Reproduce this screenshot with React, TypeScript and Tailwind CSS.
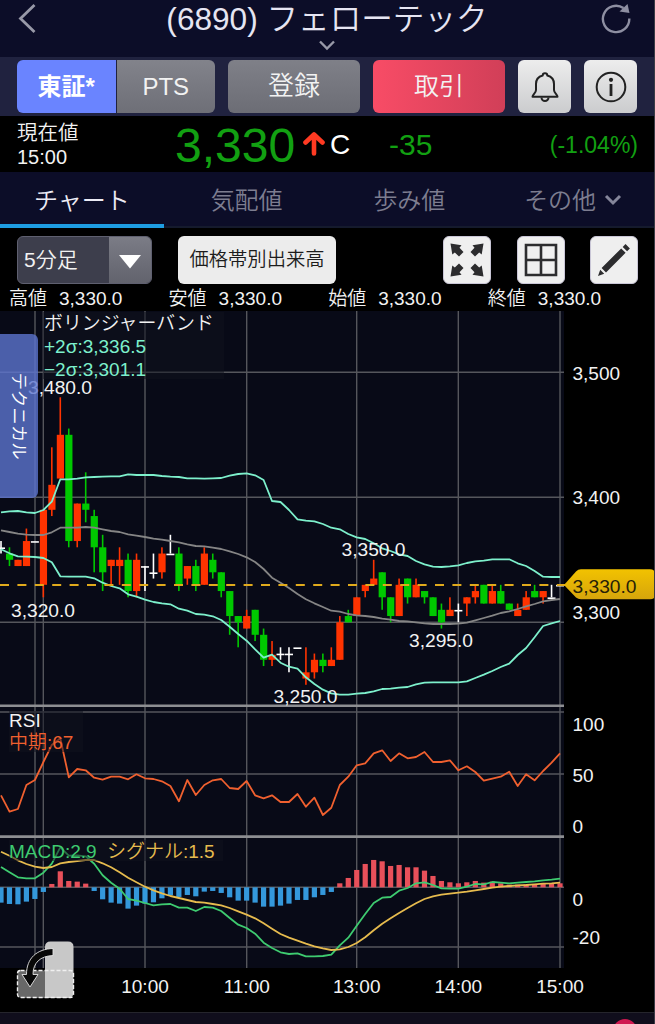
import React from 'react';

type Candle = [kind: 'r' | 'g' | 'w', high: number, top: number, bottom: number, low: number];

const STEP = 8.47;
const xAt = (i: number) => 1 + i * STEP;
const priceY = (p: number) => 372.3 + (3500 - p) * 1.25;

// 5 minute bars: colour, high, body top, body bottom, low
const CANDLES: Candle[] = [
  ['w', 3365, 3360, 3360, 3355], ['g', 3360, 3355, 3350, 3345], ['r', 3350, 3350, 3345, 3345], ['r', 3375, 3365, 3345, 3345],
  ['w', 3365, 3365, 3365, 3365], ['r', 3390, 3390, 3330, 3320], ['r', 3440, 3410, 3390, 3385], ['r', 3480, 3450, 3415, 3415],
  ['g', 3455, 3450, 3365, 3360], ['r', 3395, 3395, 3365, 3360], ['g', 3420, 3395, 3390, 3380], ['g', 3390, 3385, 3360, 3340],
  ['g', 3370, 3360, 3340, 3325], ['r', 3350, 3350, 3345, 3330], ['r', 3360, 3350, 3345, 3330], ['g', 3355, 3350, 3325, 3320],
  ['r', 3355, 3350, 3325, 3320], ['w', 3345, 3345, 3345, 3325], ['w', 3355, 3340, 3340, 3335], ['r', 3360, 3355, 3340, 3335],
  ['w', 3370, 3355, 3355, 3355], ['g', 3360, 3355, 3330, 3325], ['r', 3345, 3345, 3335, 3330], ['g', 3350, 3345, 3330, 3325],
  ['r', 3360, 3355, 3330, 3330], ['g', 3355, 3350, 3340, 3335], ['g', 3340, 3340, 3325, 3320], ['g', 3325, 3325, 3305, 3290],
  ['g', 3305, 3305, 3300, 3280], ['r', 3310, 3305, 3295, 3295], ['g', 3310, 3310, 3290, 3285], ['g', 3295, 3290, 3270, 3265],
  ['r', 3285, 3274, 3270, 3265], ['w', 3280, 3275, 3275, 3270], ['w', 3280, 3275, 3275, 3260], ['w', 3280, 3280, 3280, 3280],
  ['r', 3280, 3260, 3255, 3250], ['r', 3275, 3270, 3260, 3255], ['g', 3275, 3270, 3265, 3260], ['r', 3280, 3270, 3265, 3265],
  ['r', 3305, 3300, 3270, 3270], ['g', 3310, 3305, 3300, 3300], ['r', 3320, 3320, 3305, 3305], ['r', 3330, 3330, 3325, 3320],
  ['r', 3350, 3335, 3330, 3330], ['g', 3340, 3340, 3320, 3310], ['g', 3320, 3320, 3305, 3300], ['r', 3335, 3330, 3305, 3305],
  ['g', 3335, 3335, 3320, 3315], ['r', 3335, 3330, 3320, 3320], ['g', 3325, 3325, 3320, 3315], ['g', 3320, 3320, 3305, 3305],
  ['g', 3315, 3310, 3300, 3295], ['r', 3320, 3310, 3305, 3305], ['w', 3315, 3310, 3310, 3300], ['r', 3320, 3320, 3315, 3305],
  ['r', 3330, 3325, 3320, 3315], ['g', 3330, 3330, 3315, 3315], ['r', 3330, 3325, 3315, 3315], ['g', 3330, 3325, 3315, 3315],
  ['g', 3315, 3315, 3310, 3310], ['r', 3315, 3310, 3305, 3305], ['r', 3325, 3320, 3310, 3310], ['g', 3330, 3325, 3320, 3320],
  ['r', 3325, 3325, 3320, 3315], ['w', 3330, 3320, 3320, 3320], ['w', 3330, 3330, 3330, 3330],
];

// Indicator series, in thirds of a pixel below the panel origin
const UPPER = [607, 604, 603, 607, 609, 600, 575, 508, 508, 506, 502, 501, 500, 499, 499, 493, 495, 495, 495, 498, 500, 501, 505, 505, 506, 505, 504, 497, 492, 490, 496, 510, 573, 576, 600, 628, 632, 634, 642, 653, 658, 672, 682, 687, 700, 715, 723, 733, 738, 753, 763, 770, 771, 769, 766, 759, 754, 752, 748, 748, 748, 760, 768, 783, 800, 801, 801];
const MIDDLE = [661, 666, 671, 674, 675, 675, 667, 653, 653, 653, 651, 653, 658, 663, 666, 673, 677, 681, 686, 689, 693, 697, 703, 708, 709, 713, 717, 724, 732, 742, 756, 777, 803, 818, 834, 852, 868, 880, 891, 902, 905, 912, 916, 918, 921, 926, 929, 933, 934, 937, 940, 942, 942, 942, 941, 938, 931, 924, 917, 909, 904, 897, 889, 882, 874, 870, 867];
const LOWER = [718, 730, 739, 740, 741, 744, 757, 799, 800, 800, 800, 805, 818, 828, 835, 853, 860, 869, 876, 880, 883, 896, 902, 912, 914, 919, 930, 950, 972, 992, 1018, 1043, 1034, 1058, 1070, 1076, 1102, 1122, 1139, 1150, 1154, 1154, 1151, 1149, 1144, 1137, 1136, 1133, 1131, 1123, 1118, 1117, 1117, 1117, 1117, 1114, 1104, 1094, 1083, 1071, 1061, 1035, 1014, 982, 948, 940, 933];
const RSI = [286, 335, 327, 255, 240, 186, 135, 115, 232, 207, 211, 233, 239, 230, 230, 238, 223, 235, 237, 244, 258, 304, 240, 285, 255, 241, 237, 264, 267, 243, 286, 295, 286, 306, 306, 282, 320, 293, 345, 323, 255, 230, 196, 190, 160, 151, 183, 160, 175, 171, 156, 186, 186, 181, 211, 199, 216, 242, 236, 230, 215, 258, 223, 241, 213, 188, 160];
const SIGNAL = [455, 467, 481, 492, 500, 504, 501, 490, 486, 483, 480, 480, 490, 502, 517, 533, 547, 560, 571, 580, 588, 594, 600, 606, 608, 612, 616, 624, 634, 644, 655, 670, 686, 702, 713, 722, 731, 739, 745, 750, 748, 741, 729, 712, 691, 671, 655, 639, 624, 610, 597, 589, 584, 581, 578, 575, 571, 567, 563, 560, 558, 556, 555, 553, 551, 550, 548];
const HIST = [-46, -50, -51, -43, -35, -14, 10, 48, 19, 17, 11, -11, -36, -46, -49, -64, -55, -49, -45, -33, -24, -29, -23, -27, -13, -11, -17, -30, -40, -40, -46, -58, -58, -55, -49, -38, -38, -30, -23, -14, 12, 28, 52, 70, 82, 78, 64, 67, 60, 60, 50, 34, 19, 15, 12, 15, 19, 14, 17, 12, 8, 8, 9, 9, 10, 11, 12];
const MACD = SIGNAL.map((s, i) => s - HIST[i]);

const COLORS = { r: '#ff3300', g: '#00c800', w: '#ffffff' };
const points = (series: number[], origin: number) =>
  series.map((v, i) => `${xAt(i).toFixed(1)},${(origin + v / 3).toFixed(1)}`).join(' ');

const TIMES: [number, string][] = [[145, '10:00'], [246.7, '11:00'], [356.7, '13:00'], [458.3, '14:00'], [560, '15:00']];
const AXIS: [number, string][] = [
  [379.5, '3,500'], [504.3, '3,400'], [618.7, '3,300'], [731, '100'], [782.3, '50'], [833, '0'], [906.3, '0'], [943.7, '-20'],
];
const MARKS: [number, number, string][] = [
  [28, 393.7, '3,480.0'], [11, 616.7, '3,320.0'], [341.5, 556, '3,350.0'], [409, 646.7, '3,295.0'], [273.5, 703.3, '3,250.0'],
];

function Chart() {
  return (
    <svg width="655" height="701" viewBox="0 311 655 701" className="block" fontSize="19" fill="#f2f2f2">
      <rect x="0" y="311" width="564" height="657" fill="#080a17" />
      <g stroke="#55565c" strokeWidth="1.4">
        {[35, 43.3, 145, 246.7, 356.7, 458.3, 560].map((x) => (
          <line key={x} x1={x} x2={x} y1="311" y2="968" />
        ))}
        {[372.3, 497.3, 622.3, 712, 774, 887.3, 947].map((y) => (
          <line key={y} x1="0" x2="564" y1={y} y2={y} />
        ))}
      </g>
      <g stroke="#8d8e92" strokeWidth="2.6">
        <line x1="0" x2="564" y1="705.8" y2="705.8" />
        <line x1="0" x2="564" y1="836.6" y2="836.6" />
      </g>

      {/* Candles */}
      {CANDLES.map(([kind, high, top, bottom, low], i) => {
        const x = xAt(i);
        if (kind === 'w') {
          return (
            <g key={i} stroke="#fff" strokeWidth="1.6">
              <line x1={x} x2={x} y1={priceY(high)} y2={priceY(low)} />
              <line x1={x - 4} x2={x + 4} y1={priceY(top) + 0.9} y2={priceY(top) + 0.9} />
            </g>
          );
        }
        return (
          <g key={i} fill={COLORS[kind]}>
            <rect x={x - 0.8} y={priceY(high)} width="1.6" height={priceY(low) - priceY(high)} />
            <rect x={x - 3.5} y={priceY(top)} width="7.2" height={priceY(bottom) - priceY(top)} />
          </g>
        );
      })}

      <g fill="none" strokeWidth="1.8" strokeLinejoin="round">
        <polyline points={points(UPPER, 310)} stroke="#7df0cc" />
        <polyline points={points(MIDDLE, 310)} stroke="#858585" />
        <polyline points={points(LOWER, 310)} stroke="#7df0cc" />
        <polyline points={points(RSI, 700)} stroke="#f0602f" />
      </g>
      <line x1="0" x2="566" y1="585" y2="585" stroke="#e0aa1c" strokeWidth="1.8" strokeDasharray="9 8.4" />

      {/* MACD */}
      {HIST.map((v, i) => (
        <rect
          key={i}
          x={xAt(i) - 2.6}
          y={v > 0 ? 887.3 - v / 3 : 887.3}
          width="5.2"
          height={Math.abs(v) / 3}
          fill={v > 0 ? '#e8505a' : '#3498db'}
        />
      ))}
      <g fill="none" strokeWidth="1.8" strokeLinejoin="round">
        <polyline points={points(MACD, 700)} stroke="#3ecb70" />
        <polyline points={points(SIGNAL, 700)} stroke="#e6bb4e" />
      </g>

      {/* Legends */}
      <g fill="#10121e" fillOpacity="0.5">
        <rect x="43" y="312" width="181" height="67" />
        <rect x="9" y="711" width="74" height="41" />
        <rect x="9" y="840" width="214" height="21" />
      </g>
      <text x="44" y="329.5" fontSize="18.9">ボリンジャーバンド</text>
      <text x="44" y="353" fill="#7df0cc">+2σ:3,336.5</text>
      <text x="44" y="375.7" fill="#7df0cc">−2σ:3,301.1</text>
      <text x="9" y="726.7">RSI</text>
      <text x="9" y="748.5" fill="#f0602f">中期:67</text>
      <text x="9" y="857.5" fill="#3ecb70">MACD:2.9</text>
      <text x="107" y="857.5" fill="#e6bb4e">シグナル:1.5</text>

      {MARKS.map(([x, y, label]) => (
        <text key={label} x={x} y={y} fontSize="19.2">{label}</text>
      ))}
      {AXIS.map(([y, label]) => (
        <text key={y} x="572.5" y={y}>{label}</text>
      ))}
      {TIMES.map(([x, label]) => (
        <text key={label} x={x} y="992.5" textAnchor="middle">{label}</text>
      ))}

      {/* Current price tag */}
      <defs>
        <linearGradient id="tag" x1="0" y1="0" x2="0" y2="1">
          <stop offset="0" stopColor="#f2c200" />
          <stop offset="1" stopColor="#d6a50c" />
        </linearGradient>
      </defs>
      <path d="M564 585 L576 571.5 Q578 569.3 581 569.3 H650 Q655 569.3 655 574 V595 Q655 599.3 650 599.3 H581 Q578 599.3 576 597.5 Z" fill="url(#tag)" />
      <text x="572.5" y="592.7" fontSize="19.2" fill="#262108">3,330.0</text>

      {/* Rotate handle */}
      <path d="M45 947 Q45 941.5 50.5 941.5 H68 Q73.5 941.5 73.5 947 V992 Q73.5 998 68 998 H45 Z" fill="#c8c8c8" />
      <path d="M17.5 970.5 H45 V998 H22 Q17.5 998 17.5 993 Z" fill="#686868" />
      <rect x="17.5" y="970.5" width="56" height="27" rx="3" fill="none" stroke="#f0f0f0" strokeWidth="1.4" strokeDasharray="4 2" />
      <path d="M53 948.5 C37 949 26.500 958 26.500 974.500 H22 L30 987 L38 974.500 H33 C33 963 40 956 53 955.500 Z" fill="#080808" stroke="#e4e4e4" strokeWidth="0.9" />
    </svg>
  );
}

function Quote({ label }: { label: string }) {
  return (
    <div className="flex w-[159.6px] items-center text-[19px]">
      <span className="w-[50px]">{label}</span>
      <span>3,330.0</span>
    </div>
  );
}

const topIcon = 'flex size-[53px] items-center justify-center rounded-[6px] bg-linear-to-b from-[#ededed] to-[#cbccce]';
const toolIcon = 'flex size-12 items-center justify-center rounded-[6px] border border-[#c9c6d6] bg-[#efefef]';

export default function App() {
  return (
    <div className="relative flex h-[1024px] w-[655px] flex-col overflow-hidden bg-black font-['Liberation_Sans','Noto_Sans_CJK_JP',sans-serif] font-[350] text-[#f2f2f2]">
      {/* Title */}
      <header className="flex h-[57px] shrink-0 items-start justify-between bg-[#0c0d28] pr-6 pl-[17px]">
        <svg width="36" height="38" viewBox="0 0 36 38" fill="none" stroke="#9899a8" strokeWidth="2.8">
          <path d="M17.5 5 L3.5 18.5 L17.5 32" />
        </svg>
        <div className="flex flex-col items-center">
          <h1 className="h-[39px] text-[31.6px] leading-[38px] font-[350] whitespace-pre text-[#e6e5f2]">(6890) フェローテック</h1>
          <svg width="18" height="12" viewBox="0 0 18 12" fill="none" stroke="#9899a8" strokeWidth="2.4">
            <path d="M2 2.5 L9 9.5 L16 2.5" />
          </svg>
        </div>
        <svg width="30" height="36" viewBox="0 0 30 36" fill="none" stroke="#8e8fa2" strokeWidth="2.4">
          <path d="M28.3 18.5 A13.2 13.2 0 1 1 22.5 8" />
          <path d="M26.5 4 L28.5 13 L18.5 11.500 Z" fill="#8e8fa2" stroke="none" />
        </svg>
      </header>

      {/* Market and order buttons */}
      <div className="flex h-[59px] shrink-0 items-start bg-[#20223f] pt-[3px] pl-[17px] text-center text-2xl leading-[53px]">
        <div className="h-[53px] w-[98.5px] rounded-l-[6px] bg-[#6a84ff] font-bold text-white">東証*</div>
        <div className="ml-px h-[53px] w-[98.5px] rounded-r-[6px] bg-linear-to-b from-[#82838b] to-[#6e6f77]">PTS</div>
        <div className="ml-[13px] h-[53px] w-[132px] rounded-[6px] bg-linear-to-b from-[#7f8088] to-[#6c6d75] text-[26px]">登録</div>
        <div className="ml-[13px] h-[53px] w-[132px] rounded-[6px] bg-linear-to-r from-[#f84c66] to-[#d13f58] text-[25px]">取引</div>
        <div className={`ml-[13px] ${topIcon}`}>
          <svg width="30" height="32" viewBox="0 0 30 32" fill="none" stroke="#222" strokeWidth="2" strokeLinejoin="round">
            <path d="M12.7 4.5 A2.3 2.3 0 0 1 17.3 4.5 C22 5.7 24 9 24 13 V19 C24 22 27.5 23.5 27.5 25.8 H2.5 C2.5 23.5 6 22 6 19 V13 C6 9 8 5.7 12.7 4.5 Z" />
            <path d="M11.5 26.5 A3.5 3.5 0 0 0 18.5 26.5" />
          </svg>
        </div>
        <div className={`ml-[13px] ${topIcon}`}>
          <svg width="32" height="32" viewBox="0 0 32 32" fill="none" stroke="#222" strokeWidth="2">
            <circle cx="16" cy="16" r="14.3" />
            <circle cx="16" cy="8.8" r="2.1" fill="#222" stroke="none" />
            <path d="M16 13 V25" strokeWidth="2.8" />
          </svg>
        </div>
      </div>

      {/* Last price */}
      <div className="flex h-14 shrink-0 items-center text-[#12a012]">
        <div className="ml-[17px] w-[158px] pt-px text-[20.5px] leading-[25px] text-[#f2f2f2]">
          <div>現在値</div>
          <div className="text-[20px]">15:00</div>
        </div>
        <div className="w-[126px] pt-1 text-[48px] leading-none">3,330</div>
        <svg width="24" height="26" viewBox="0 0 24 26" fill="none" stroke="#ff3a22" strokeWidth="4.6" strokeLinecap="round" strokeLinejoin="round">
          <path d="M13 22.5 V5 M4.5 11.5 L13 3.5 L21.5 11.5" />
        </svg>
        <div className="ml-[5px] w-[59px] pt-0.5 text-[28px] text-white">C</div>
        <div className="w-[100px] text-[30px]">-35</div>
        <div className="w-[149px] pt-0.5 text-right text-[23px]">(-1.04%)</div>
      </div>

      {/* Tabs */}
      <nav className="grid h-14 shrink-0 grid-cols-4 border-b-2 border-[#151a2d] bg-[#0c0d28] text-center text-2xl leading-[57px] text-[#7d7d90]">
        <div className="h-14 border-b-4 border-[#1e9de3] text-[#ecebf5]">チャート</div>
        <div className="h-14 pl-0.5">気配値</div>
        <div className="h-14">歩み値</div>
        <div className="flex h-14 items-center justify-center gap-2">
          その他
          <svg width="18" height="12" viewBox="0 0 18 12" fill="none" stroke="#85869a" strokeWidth="3">
            <path d="M2 2 L9 9 L16 2" />
          </svg>
        </div>
      </nav>

      {/* Toolbar */}
      <div className="flex shrink-0 items-center pt-2 pl-[17px]">
        <div className="flex h-12 w-[135px] overflow-hidden rounded-[6px] border border-[#5f6070] bg-[#3d3e4c]">
          <div className="w-[91px] pl-1.5 text-[21px] leading-[46px]">5分足</div>
          <div className="flex flex-1 items-center justify-center bg-linear-to-b from-[#7b7c86] to-[#62636d]">
            <svg width="22" height="14" viewBox="0 0 22 14" className="mt-1">
              <path d="M0 0 H22 L11 13.5 Z" fill="#fff" />
            </svg>
          </div>
        </div>
        <div className="ml-[26px] h-12 w-[158px] rounded-[6px] bg-[#ececec] text-center text-[19.3px] leading-[48px] whitespace-nowrap text-[#1c1c1c]">価格帯別出来高</div>
        <div className={`ml-[107px] ${toolIcon}`}>
          <svg width="34" height="34" viewBox="0 0 34 34" fill="#2c2c2e">
            {[0, 90, 180, 270].map((angle) => (
              <path key={angle} transform={`rotate(${angle} 17 17)`} d="M0.5 0.5 L11.5 2.3 L9.5 4.800 L13.5 9 L9 13.5 L4.8 9.5 L2.3 11.5 Z" />
            ))}
          </svg>
        </div>
        <div className={`ml-[25.5px] ${toolIcon}`}>
          <svg width="34" height="34" viewBox="0 0 34 34" fill="none" stroke="#2c2c2e" strokeWidth="2.6">
            <path d="M2 2 H32 V32 H2 Z M17 2 V32 M2 17 H32" />
          </svg>
        </div>
        <div className={`ml-[25.5px] ${toolIcon}`}>
          <svg width="34" height="34" viewBox="0 0 34 34" fill="#2c2c2e">
            <path d="M1 33 L3.2 26.8 L7.2 30.8 Z M4.6 25 L24.2 5.4 L28.6 9.8 L9 29.4 Z M25.7 3.900 L28.500 1.100 L32.900 5.500 L30.100 8.300 Z" />
          </svg>
        </div>
      </div>
      <div className="flex h-[27px] shrink-0 items-center pt-[3px] pl-[9px]">
        <Quote label="高値" />
        <Quote label="安値" />
        <Quote label="始値" />
        <Quote label="終値" />
      </div>

      {/* Chart with the technical drawer handle over it */}
      <div className="relative shrink-0">
        <Chart />
        <div className="absolute top-[23px] left-0 flex h-[164px] w-[38px] items-center justify-center rounded-r-[6px] bg-[#5c74d0]/80">
          <span className="rotate-90 text-[17.5px] whitespace-nowrap text-white">テクニカル</span>
        </div>
      </div>

      <footer className="relative flex-1 border-t border-[#25252c] bg-[#100e1c]">
        <div className="absolute top-1.5 left-[613px] size-6 rounded-full bg-[#d01850]" />
      </footer>
      <div className="absolute inset-y-0 right-0 w-px bg-[#3c3c46]" />
    </div>
  );
}
